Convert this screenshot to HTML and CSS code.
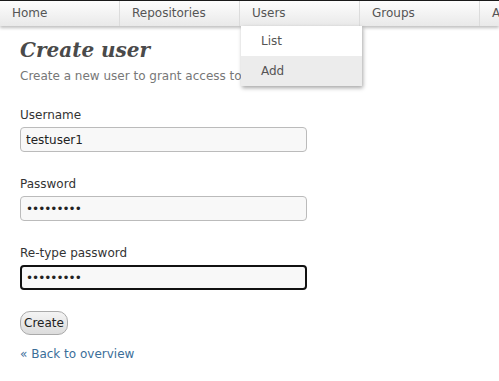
FILE: index.html
```html
<!DOCTYPE html>
<html lang="en">
<head>
    <meta charset="UTF-8">
    <title>Create user</title>
    <link rel="stylesheet" href="styles.css">
</head>
<body>
    <div class="topbar">
        <ul class="nav">
            <li class="nav-item">Home</li>
            <li class="nav-item">Repositories</li>
            <li class="nav-item open">Users
                <ul class="dropdown">
                    <li class="dropdown-item">List</li>
                    <li class="dropdown-item active">Add</li>
                </ul>
            </li>
            <li class="nav-item">Groups</li>
            <li class="nav-item">Access</li>
        </ul>
    </div>

    <div class="content">
        <h1 class="title">Create user</h1>
        <p class="subtitle">Create a new user to grant access to Git.</p>

        <form class="user-form">
            <div class="field">
                <label class="field-label">Username</label>
                <input class="field-input" type="text" value="testuser1">
            </div>
            <div class="field">
                <label class="field-label">Password</label>
                <input class="field-input secret" type="password" value="secret123">
            </div>
            <div class="field">
                <label class="field-label">Re-type password</label>
                <input class="field-input secret focused" type="password" value="secret123">
            </div>
            <button class="btn" type="button">Create</button>
        </form>

        <a class="back-link" href="#">&laquo; Back to overview</a>
    </div>
</body>
</html>
```

FILE: styles.css
```css
* {
    box-sizing: border-box;
    margin: 0;
    padding: 0;
}

body {
    font-family: 'DejaVu Sans', Verdana, sans-serif;
    font-size: 12px;
    color: #444;
    background: #fff;
    overflow: hidden;
}

/* top navigation */
.topbar {
    border-top: 1px solid #1a1a1a;
    background: linear-gradient(to bottom, #fdfdfd, #e9e9e9);
    box-shadow: 0 2px 3px rgba(0, 0, 0, 0.25);
    height: 26px;
    position: relative;
    z-index: 2;
}

.nav {
    list-style: none;
    display: flex;
    height: 100%;
    white-space: nowrap;
}

.nav-item {
    position: relative;
    flex: 0 0 120px;
    padding-left: 12px;
    line-height: 24px;
    color: #555;
    border-right: 1px solid #dcdcdc;
}

.dropdown {
    display: none;
    list-style: none;
    position: absolute;
    top: 25px;
    left: 1px;
    width: 121px;
    background: #fff;
    box-shadow: 1px 2px 4px rgba(0, 0, 0, 0.35);
}

.nav-item.open .dropdown {
    display: block;
}

.dropdown-item {
    height: 30px;
    line-height: 30px;
    padding-left: 20px;
    color: #555;
}

.dropdown-item.active {
    background: #ececec;
}

/* page content */
.content {
    padding: 9px 20px 0;
}

.title {
    font-family: 'DejaVu Serif', Georgia, serif;
    font-style: italic;
    font-weight: bold;
    font-size: 20px;
    line-height: 30px;
    color: #4a4a4a;
}

.subtitle {
    font-size: 12px;
    line-height: 16px;
    color: #777;
    margin-top: 3px;
    white-space: nowrap;
}

.user-form {
    margin-top: 24px;
}

.field {
    margin-bottom: 25px;
}

.field-label {
    display: block;
    line-height: 15px;
    color: #333;
    margin-bottom: 4px;
}

.field-input {
    display: block;
    width: 287px;
    height: 25px;
    padding: 0 5px;
    font-family: 'DejaVu Sans', Verdana, sans-serif;
    font-size: 12px;
    color: #222;
    background: #f8f8f8;
    border: 1px solid #bbb;
    border-radius: 4px;
    outline: none;
}

.field-input.secret {
    letter-spacing: -1px;
}

.field-input.focused {
    border: 2px solid #111;
    padding: 0 4px;
}

.btn {
    display: block;
    margin-top: -4px;
    height: 24px;
    padding: 0 3px;
    font-family: 'DejaVu Sans', Verdana, sans-serif;
    font-size: 12px;
    color: #222;
    background: linear-gradient(to bottom, #f4f4f4, #dcdcdc);
    border: 1px solid #aaa;
    border-radius: 10px;
}

.back-link {
    display: inline-block;
    margin-top: 12px;
    line-height: 15px;
    font-size: 12px;
    color: #3b6e99;
    text-decoration: none;
}
```
